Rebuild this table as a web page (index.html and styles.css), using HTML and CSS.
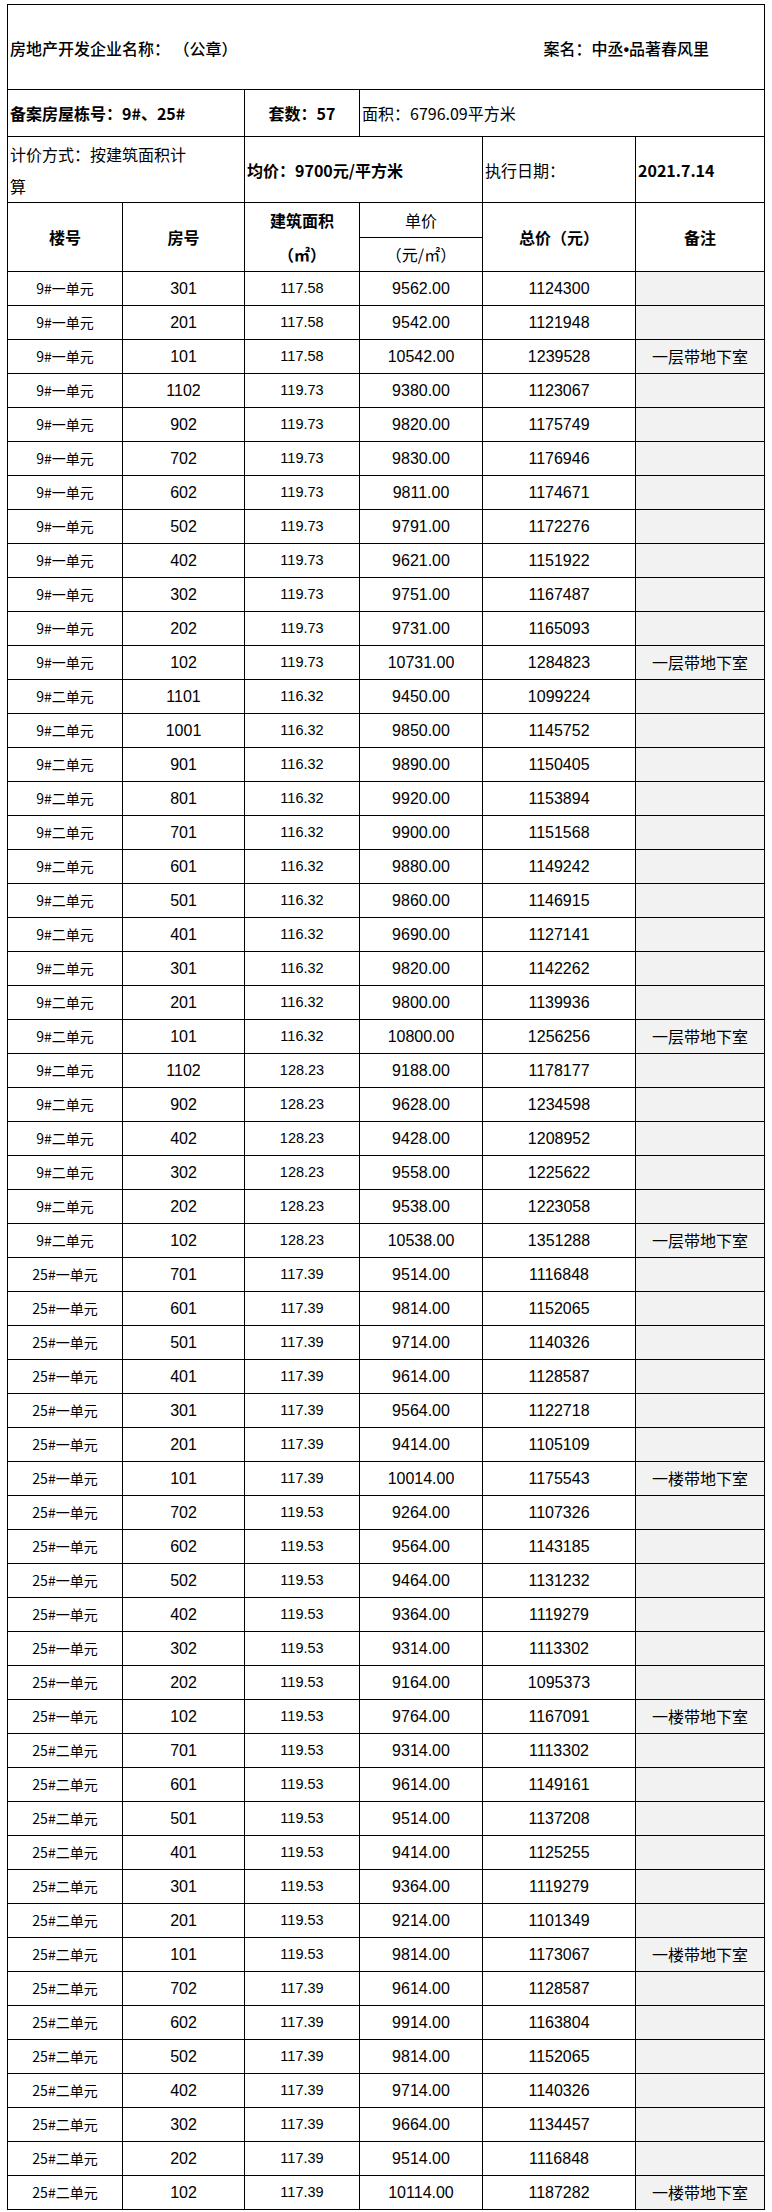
FILE: index.html
```html
<!DOCTYPE html>
<html lang="zh-CN">
<head>
<meta charset="utf-8">
<title>价格公示</title>
<link rel="stylesheet" href="styles.css">
</head>
<body>
<table class="sheet">
  <colgroup>
    <col class="c1"><col class="c2"><col class="c3"><col class="c4"><col class="c5"><col class="c6">
  </colgroup>
  <tbody>
    <tr class="r-title">
      <td colspan="6" class="title-cell">
        <div class="title-line">
          <span>房地产开发企业名称： （公章）</span>
          <span class="case-name">案名：中丞<span class="dot">•</span>品著春风里</span>
        </div>
      </td>
    </tr>
    <tr class="r-info">
      <td colspan="2" class="left bold">备案房屋栋号：9#、25#</td>
      <td class="center bold">套数：57</td>
      <td colspan="3" class="left">面积：6796.09平方米</td>
    </tr>
    <tr class="r-price">
      <td colspan="2" class="left tall">计价方式：按建筑面积计<br>算</td>
      <td colspan="2" class="left bold">均价：9700元/平方米</td>
      <td class="left">执行日期：</td>
      <td class="left bold date">2021.7.14</td>
    </tr>
    <tr class="r-head">
      <th rowspan="2">楼号</th>
      <th rowspan="2">房号</th>
      <th rowspan="2" class="tall">建筑面积<br>（㎡）</th>
      <th class="thin">单价</th>
      <th rowspan="2">总价（元）</th>
      <th rowspan="2">备注</th>
    </tr>
    <tr class="r-head">
      <th class="thin">（元/㎡）</th>
    </tr>
  </tbody>
  <tbody id="rows"></tbody>
</table>
<script src="rows.js"></script>
</body>
</html>
```
FILE: rows.js
```js
const data = [
["9#一单元","301","117.58","9562.00","1124300",""],
["9#一单元","201","117.58","9542.00","1121948",""],
["9#一单元","101","117.58","10542.00","1239528","一层带地下室"],
["9#一单元","1102","119.73","9380.00","1123067",""],
["9#一单元","902","119.73","9820.00","1175749",""],
["9#一单元","702","119.73","9830.00","1176946",""],
["9#一单元","602","119.73","9811.00","1174671",""],
["9#一单元","502","119.73","9791.00","1172276",""],
["9#一单元","402","119.73","9621.00","1151922",""],
["9#一单元","302","119.73","9751.00","1167487",""],
["9#一单元","202","119.73","9731.00","1165093",""],
["9#一单元","102","119.73","10731.00","1284823","一层带地下室"],
["9#二单元","1101","116.32","9450.00","1099224",""],
["9#二单元","1001","116.32","9850.00","1145752",""],
["9#二单元","901","116.32","9890.00","1150405",""],
["9#二单元","801","116.32","9920.00","1153894",""],
["9#二单元","701","116.32","9900.00","1151568",""],
["9#二单元","601","116.32","9880.00","1149242",""],
["9#二单元","501","116.32","9860.00","1146915",""],
["9#二单元","401","116.32","9690.00","1127141",""],
["9#二单元","301","116.32","9820.00","1142262",""],
["9#二单元","201","116.32","9800.00","1139936",""],
["9#二单元","101","116.32","10800.00","1256256","一层带地下室"],
["9#二单元","1102","128.23","9188.00","1178177",""],
["9#二单元","902","128.23","9628.00","1234598",""],
["9#二单元","402","128.23","9428.00","1208952",""],
["9#二单元","302","128.23","9558.00","1225622",""],
["9#二单元","202","128.23","9538.00","1223058",""],
["9#二单元","102","128.23","10538.00","1351288","一层带地下室"],
["25#一单元","701","117.39","9514.00","1116848",""],
["25#一单元","601","117.39","9814.00","1152065",""],
["25#一单元","501","117.39","9714.00","1140326",""],
["25#一单元","401","117.39","9614.00","1128587",""],
["25#一单元","301","117.39","9564.00","1122718",""],
["25#一单元","201","117.39","9414.00","1105109",""],
["25#一单元","101","117.39","10014.00","1175543","一楼带地下室"],
["25#一单元","702","119.53","9264.00","1107326",""],
["25#一单元","602","119.53","9564.00","1143185",""],
["25#一单元","502","119.53","9464.00","1131232",""],
["25#一单元","402","119.53","9364.00","1119279",""],
["25#一单元","302","119.53","9314.00","1113302",""],
["25#一单元","202","119.53","9164.00","1095373",""],
["25#一单元","102","119.53","9764.00","1167091","一楼带地下室"],
["25#二单元","701","119.53","9314.00","1113302",""],
["25#二单元","601","119.53","9614.00","1149161",""],
["25#二单元","501","119.53","9514.00","1137208",""],
["25#二单元","401","119.53","9414.00","1125255",""],
["25#二单元","301","119.53","9364.00","1119279",""],
["25#二单元","201","119.53","9214.00","1101349",""],
["25#二单元","101","119.53","9814.00","1173067","一楼带地下室"],
["25#二单元","702","117.39","9614.00","1128587",""],
["25#二单元","602","117.39","9914.00","1163804",""],
["25#二单元","502","117.39","9814.00","1152065",""],
["25#二单元","402","117.39","9714.00","1140326",""],
["25#二单元","302","117.39","9664.00","1134457",""],
["25#二单元","202","117.39","9514.00","1116848",""],
["25#二单元","102","117.39","10114.00","1187282","一楼带地下室"]
];
const classes = ["bld", "num room", "num area", "num price", "num total", "note"];
const body = document.getElementById("rows");
for (const row of data) {
  const tr = document.createElement("tr");
  tr.className = "r-data";
  row.forEach((v, i) => {
    const td = document.createElement("td");
    td.className = classes[i];
    td.textContent = v;
    tr.appendChild(td);
  });
  body.appendChild(tr);
}
```
FILE: styles.css
```css
html, body {
  margin: 0;
  padding: 0;
  background: #ffffff;
}
body {
  font-family: "Noto Sans CJK SC", "Liberation Sans", sans-serif;
  color: #000;
}
.sheet {
  margin: 4px 0 0 7px;
  border-collapse: collapse;
  table-layout: fixed;
  width: 757px;
}
.c1 { width: 115px; }
.c2 { width: 122px; }
.c3 { width: 115px; }
.c4 { width: 123px; }
.c5 { width: 153px; }
.c6 { width: 129px; }

.sheet td, .sheet th {
  border: 1px solid #000;
  padding: 0 2px;
  font-size: 16px;
  font-weight: 400;
  line-height: 32px;
  vertical-align: middle;
  overflow: hidden;
  white-space: nowrap;
}
.r-title { height: 85px; }
.r-info { height: 47px; }
.r-price { height: 66px; }
.r-head { height: 34px; }
.r-data { height: 34px; }

.title-line {
  display: flex;
  justify-content: space-between;
  padding: 4px 53px 0 0;
  font-weight: 500;
}
.dot {
  font-family: "Liberation Sans", sans-serif;
  font-weight: 700;
}
.left { text-align: left; }
.center { text-align: center; }
.bold { font-weight: 700 !important; }
.date { padding-left: 3px; }
.sheet th {
  font-weight: 700;
  text-align: center;
}
.sheet th.tall { line-height: 34px; }
.sheet th.thin { font-weight: 400; }

.r-data td {
  text-align: center;
  padding: 0;
  line-height: 33px;
}
.r-data td.bld {
  font-size: 14px;
}
.r-data td.num {
  font-family: "Liberation Sans Narrow", "Liberation Sans", sans-serif;
  font-size: 16px;
}
.r-data td.area {
  font-size: 14.5px;
}
.r-data td.note {
  background: #f2f2f2;
  font-size: 16px;
}
```
